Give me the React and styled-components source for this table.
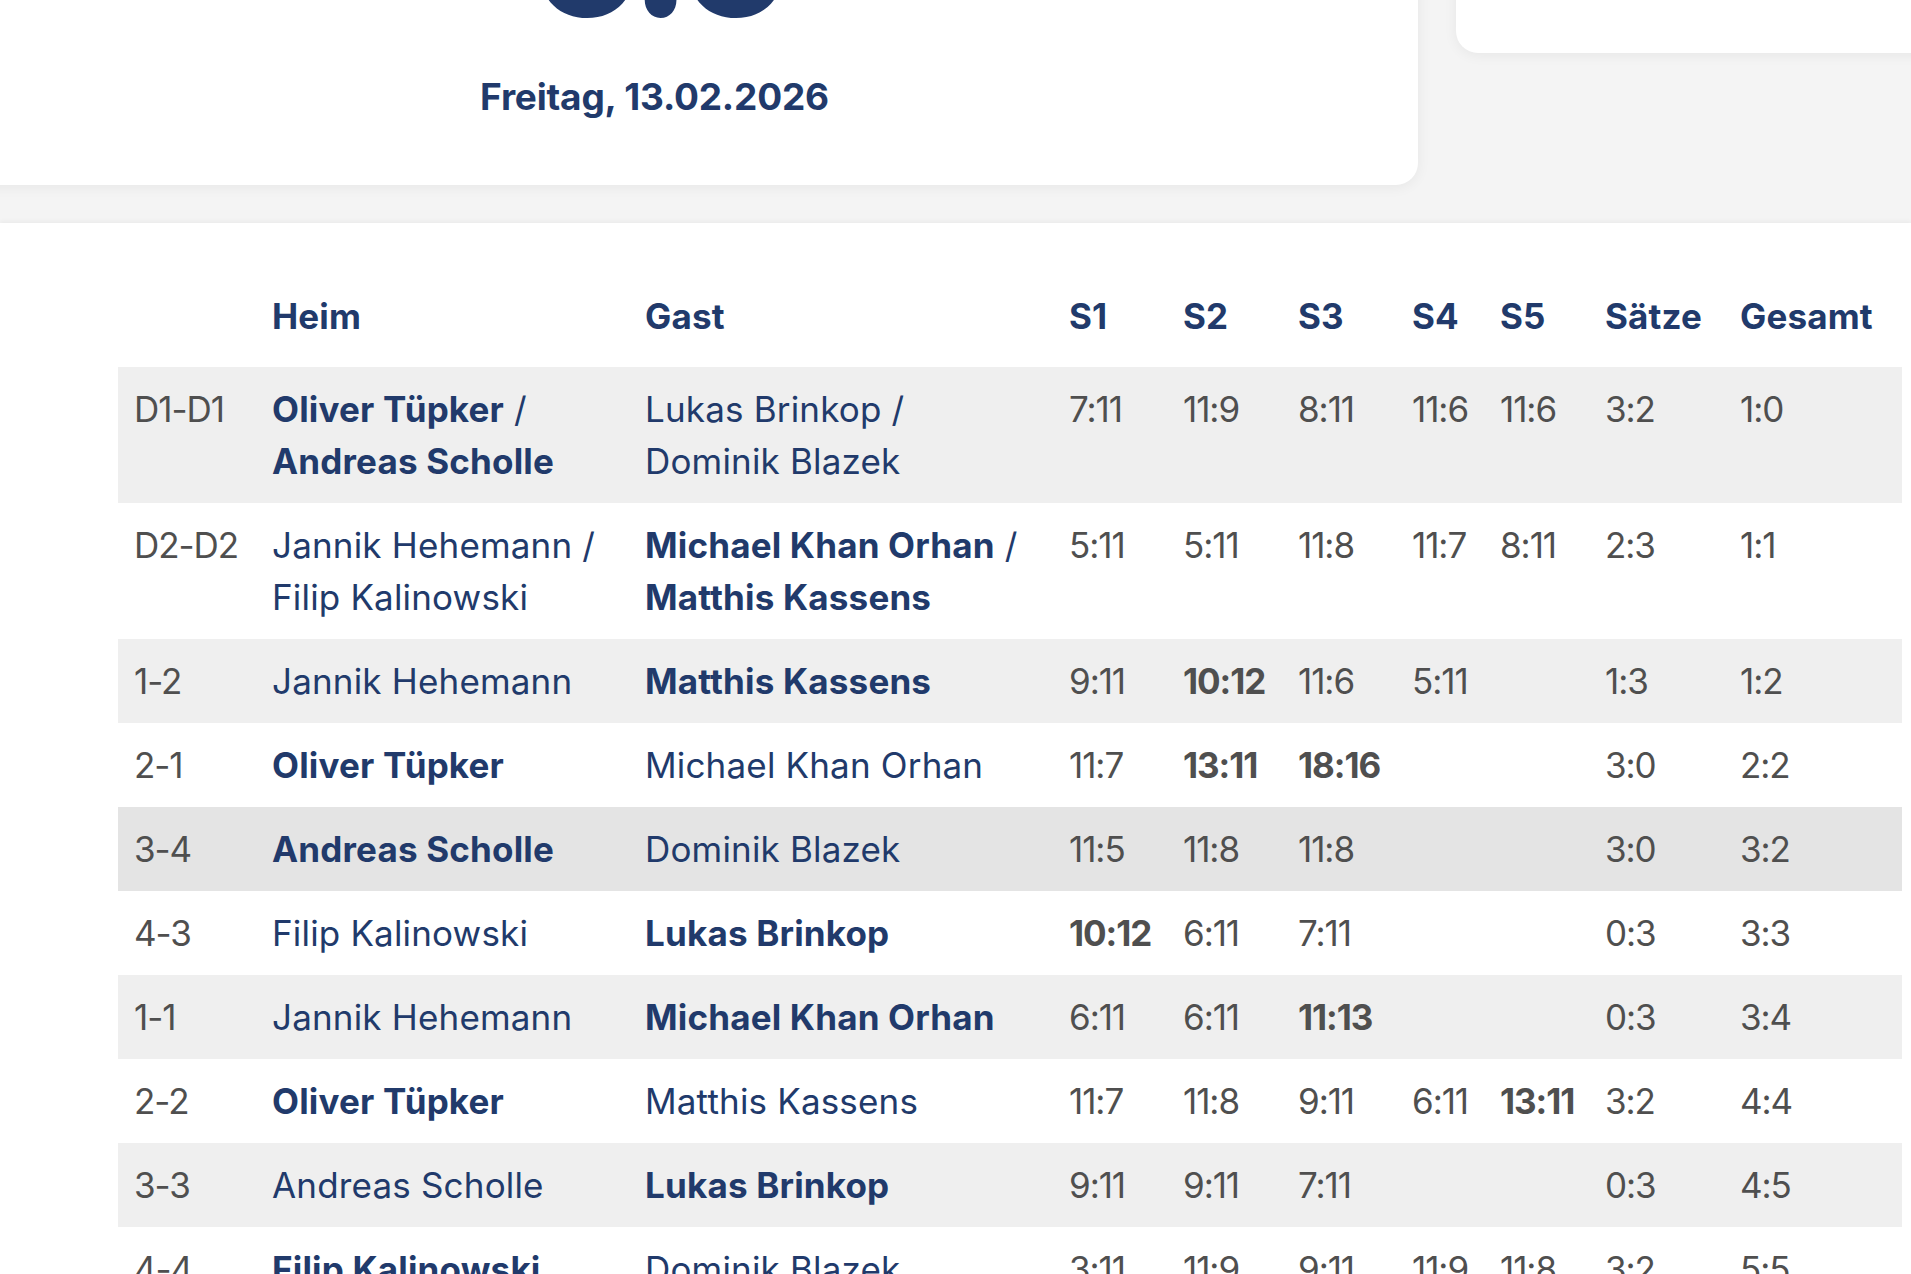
import React from "react";
import styled, { createGlobalStyle } from "styled-components";

const NAVY = "#213a6b";
const GREY_TEXT = "#4f4f4f";

const GlobalStyle = createGlobalStyle`
  html, body {
    margin: 0;
    padding: 0;
    background: #ffffff;
    overflow: hidden;
  }
  body {
    font-family: Inter, "Noto Sans", Arial, sans-serif;
    -webkit-font-smoothing: antialiased;
  }
`;

const COLUMNS = [138, 373, 424, 114, 115, 114, 88, 105, 135, 178];

const MATCHES = [
  {
    label: "D1-D1",
    home: [["Oliver Tüpker", true], ["Andreas Scholle", true]],
    away: [["Lukas Brinkop", false], ["Dominik Blazek", false]],
    sets: ["7:11", "11:9", "8:11", "11:6", "11:6"],
    bold: [],
    result: "3:2",
    total: "1:0",
  },
  {
    label: "D2-D2",
    home: [["Jannik Hehemann", false], ["Filip Kalinowski", false]],
    away: [["Michael Khan Orhan", true], ["Matthis Kassens", true]],
    sets: ["5:11", "5:11", "11:8", "11:7", "8:11"],
    bold: [],
    result: "2:3",
    total: "1:1",
  },
  {
    label: "1-2",
    home: [["Jannik Hehemann", false]],
    away: [["Matthis Kassens", true]],
    sets: ["9:11", "10:12", "11:6", "5:11", ""],
    bold: [1],
    result: "1:3",
    total: "1:2",
  },
  {
    label: "2-1",
    home: [["Oliver Tüpker", true]],
    away: [["Michael Khan Orhan", false]],
    sets: ["11:7", "13:11", "18:16", "", ""],
    bold: [1, 2],
    result: "3:0",
    total: "2:2",
  },
  {
    label: "3-4",
    home: [["Andreas Scholle", true]],
    away: [["Dominik Blazek", false]],
    sets: ["11:5", "11:8", "11:8", "", ""],
    bold: [],
    result: "3:0",
    total: "3:2",
    active: true,
  },
  {
    label: "4-3",
    home: [["Filip Kalinowski", false]],
    away: [["Lukas Brinkop", true]],
    sets: ["10:12", "6:11", "7:11", "", ""],
    bold: [0],
    result: "0:3",
    total: "3:3",
  },
  {
    label: "1-1",
    home: [["Jannik Hehemann", false]],
    away: [["Michael Khan Orhan", true]],
    sets: ["6:11", "6:11", "11:13", "", ""],
    bold: [2],
    result: "0:3",
    total: "3:4",
  },
  {
    label: "2-2",
    home: [["Oliver Tüpker", true]],
    away: [["Matthis Kassens", false]],
    sets: ["11:7", "11:8", "9:11", "6:11", "13:11"],
    bold: [4],
    result: "3:2",
    total: "4:4",
  },
  {
    label: "3-3",
    home: [["Andreas Scholle", false]],
    away: [["Lukas Brinkop", true]],
    sets: ["9:11", "9:11", "7:11", "", ""],
    bold: [],
    result: "0:3",
    total: "4:5",
  },
  {
    label: "4-4",
    home: [["Filip Kalinowski", true]],
    away: [["Dominik Blazek", false]],
    sets: ["3:11", "11:9", "9:11", "11:9", "11:8"],
    bold: [],
    result: "3:2",
    total: "5:5",
  },
];

const Page = styled.div`
  width: 100%;
  min-height: 100vh;
  background: #ffffff;
`;

const TopArea = styled.section`
  display: flex;
  align-items: flex-start;
  gap: 38px;
  margin: -197px 0 0 -109px;
  padding-bottom: 38px;
  background: #f4f4f4;
`;

const ScoreCard = styled.div`
  flex: 0 0 1527px;
  display: flex;
  flex-direction: column;
  align-items: center;
  padding: 40px 0 66px;
  background: #ffffff;
  border-radius: 22px;
  box-shadow: 0 2px 14px rgba(0, 0, 0, 0.06);
`;

const BigScore = styled.div`
  font-size: 200px;
  line-height: 1;
  font-weight: 800;
  letter-spacing: -0.07em;
  transform: scaleX(0.86);
  color: ${NAVY};
`;

const MatchDate = styled.div`
  margin-top: 32px;
  font-size: 37px;
  line-height: 1.2;
  font-weight: 700;
  letter-spacing: -0.005em;
  color: ${NAVY};
`;

const SideCard = styled.div`
  flex: 0 0 600px;
  height: 250px;
  background: #ffffff;
  border-radius: 22px;
  box-shadow: 0 2px 14px rgba(0, 0, 0, 0.06);
`;

const TableSection = styled.section`
  position: relative;
  padding: 51px 0 80px 118px;
  background: #ffffff;
  box-shadow: 0 -2px 4px rgba(0, 0, 0, 0.04);
`;

const Table = styled.table`
  width: 1784px;
  border-collapse: collapse;
  table-layout: fixed;
  font-size: 35px;
  line-height: 52px;
`;

const Col = styled.col`
  width: ${({ $w }) => $w}px;
`;

const HeadCell = styled.th`
  padding: 16px 16px 25px;
  text-align: left;
  font-weight: 700;
  color: ${NAVY};
  letter-spacing: 0.005em;
`;

const Row = styled.tr`
  background: ${({ $shade }) => $shade};
`;

const Cell = styled.td`
  padding: 16px;
  vertical-align: top;
  text-align: left;
  white-space: nowrap;
  color: ${({ $tone }) => ($tone === "name" ? NAVY : GREY_TEXT)};
  font-weight: ${({ $strong }) => ($strong ? 700 : 400)};
  letter-spacing: ${({ $tone }) => ($tone === "name" ? "0.005em" : "-0.03em")};
`;

const Player = styled.span`
  font-weight: ${({ $winner }) => ($winner ? 700 : 400)};
`;

const Players = ({ list }) =>
  list.map(([name, winner], i) => (
    <React.Fragment key={name}>
      <Player $winner={winner}>{name}</Player>
      {i < list.length - 1 && (
        <>
          {" /"}
          <br />
        </>
      )}
    </React.Fragment>
  ));

const rowShade = (match, index) => {
  if (match.active) return "#e4e4e4";
  return index % 2 === 0 ? "#efefef" : "#ffffff";
};

const HEADERS = ["", "Heim", "Gast", "S1", "S2", "S3", "S4", "S5", "Sätze", "Gesamt"];

export default function App() {
  return (
    <Page>
      <GlobalStyle />
      <TopArea>
        <ScoreCard>
          <BigScore>5:5</BigScore>
          <MatchDate>Freitag, 13.02.2026</MatchDate>
        </ScoreCard>
        <SideCard />
      </TopArea>
      <TableSection>
        <Table>
          <colgroup>
            {COLUMNS.map((w, i) => (
              <Col key={i} $w={w} />
            ))}
          </colgroup>
          <thead>
            <tr>
              {HEADERS.map((h, i) => (
                <HeadCell key={i}>{h}</HeadCell>
              ))}
            </tr>
          </thead>
          <tbody>
            {MATCHES.map((m, idx) => (
              <Row key={m.label} $shade={rowShade(m, idx)}>
                <Cell>{m.label}</Cell>
                <Cell $tone="name">
                  <Players list={m.home} />
                </Cell>
                <Cell $tone="name">
                  <Players list={m.away} />
                </Cell>
                {m.sets.map((s, i) => (
                  <Cell key={i} $strong={m.bold.includes(i)}>
                    {s}
                  </Cell>
                ))}
                <Cell>{m.result}</Cell>
                <Cell>{m.total}</Cell>
              </Row>
            ))}
          </tbody>
        </Table>
      </TableSection>
    </Page>
  );
}
